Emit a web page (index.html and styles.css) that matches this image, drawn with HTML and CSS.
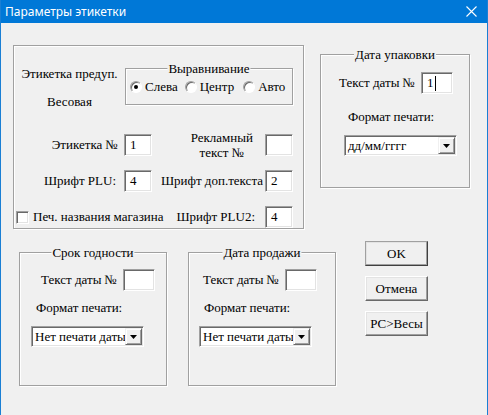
FILE: index.html
```html
<!DOCTYPE html>
<html lang="ru">
  <head>
    <meta charset="UTF-8" />
    <title>Параметры этикетки</title>
    <link rel="stylesheet" href="styles.css">
  </head>
  <body>
    <div class="window">
      <div class="titlebar">
        <span class="title">Параметры этикетки</span>
        <svg class="close" width="11" height="11" viewBox="0 0 11 11">
          <path d="M0.5 0.5 L10.5 10.5 M10.5 0.5 L0.5 10.5" stroke="#fff" stroke-width="1.1" fill="none" />
        </svg>
      </div>

      <div class="client">
        <div class="top">
          <!-- label settings -->
          <div class="group main">
            <div class="head">
              <div class="kind">
                <span>Этикетка предуп.</span>
                <span>Весовая</span>
              </div>
              <div class="group align">
                <span class="caption">Выравнивание</span>
                <label class="option"><span class="radio on"></span>Слева</label>
                <label class="option"><span class="radio"></span>Центр</label>
                <label class="option opt-last"><span class="radio"></span>Авто</label>
              </div>
            </div>

            <div class="fields">
              <span class="lbl">Этикетка №</span>
              <span class="field">1</span>
              <span class="lbl lbl-ad"><span class="two-line">Рекламный<br />текст №</span></span>
              <span class="field"></span>

              <span class="lbl lbl-plu">Шрифт PLU:</span>
              <span class="field">4</span>
              <span class="lbl lbl-extra">Шрифт доп.текста</span>
              <span class="field">2</span>

              <label class="check"><span class="box"></span>Печ. названия магазина</label>
              <span class="lbl lbl-plu2">Шрифт PLU2:</span>
              <span class="field">4</span>
            </div>
          </div>

          <!-- pack date -->
          <div class="group pack">
            <span class="caption">Дата упаковки</span>
            <div class="row">
              <span class="row-lbl">Текст даты №</span>
              <span class="field wide">1<span class="caret"></span></span>
            </div>
            <div class="fmt fmt-pack">Формат печати:</div>
            <div class="combo combo-pack">
              <span class="combo-text">дд/мм/гггг</span>
              <span class="drop"><svg width="7" height="4" viewBox="0 0 7 4"><path d="M0 0 H7 L3.5 4 Z" fill="#000" /></svg></span>
            </div>
          </div>
        </div>

        <div class="bottom">
          <div class="group date date-exp">
            <span class="caption">Срок годности</span>
            <div class="row">
              <span class="row-lbl">Текст даты №</span>
              <span class="field wide"></span>
            </div>
            <div class="fmt">Формат печати:</div>
            <div class="combo">
              <span class="combo-text">Нет печати даты</span>
              <span class="drop"><svg width="7" height="4" viewBox="0 0 7 4"><path d="M0 0 H7 L3.5 4 Z" fill="#000" /></svg></span>
            </div>
          </div>

          <div class="group date date-sale">
            <span class="caption">Дата продажи</span>
            <div class="row">
              <span class="row-lbl">Текст даты №</span>
              <span class="field wide"></span>
            </div>
            <div class="fmt">Формат печати:</div>
            <div class="combo">
              <span class="combo-text">Нет печати даты</span>
              <span class="drop"><svg width="7" height="4" viewBox="0 0 7 4"><path d="M0 0 H7 L3.5 4 Z" fill="#000" /></svg></span>
            </div>
          </div>

          <div class="buttons">
            <button class="btn default">OK</button>
            <button class="btn">Отмена</button>
            <button class="btn">PC&gt;Весы</button>
          </div>
        </div>
      </div>
    </div>
  </body>
</html>
```

FILE: styles.css
```css
* {
  box-sizing: border-box;
}
body {
  margin: 0;
  font-family: "Liberation Serif", Tinos, "Times New Roman", "DejaVu Serif", serif;
  font-size: 13px;
  color: #000;
  background: #f0f0f0;
}
.window {
  width: 488px;
  height: 415px;
  background: #f0f0f0;
  border-left: 1px solid #1a7fd4;
  border-right: 1px solid #1a7fd4;
  overflow: hidden;
}
.titlebar {
  height: 23px;
  background: #0078d7;
  color: #fff;
  display: flex;
  align-items: center;
  justify-content: space-between;
  padding: 0 10px 1px 4px;
  font-family: "Noto Sans", sans-serif;
  font-size: 12px;
}
.close {
  display: block;
}

/* group boxes */
.group {
  position: relative;
  border: 1px solid #a0a0a0;
  box-shadow: inset 1px 1px 0 #fff, 1px 1px 0 #fff;
}
.caption {
  position: absolute;
  top: -8px;
  left: 50%;
  transform: translateX(-50%);
  padding: 0 1px;
  line-height: 15px;
  white-space: nowrap;
  background: #f0f0f0;
}

.top {
  display: flex;
  align-items: flex-start;
  padding: 22px 0 0 12px;
}
.main {
  width: 291px;
  height: 184px;
  padding-top: 22px;
}
.head {
  display: flex;
}
.kind {
  width: 111px;
  margin-top: -2px;
  display: flex;
  flex-direction: column;
  align-items: center;
  gap: 13px;
  line-height: 15px;
}
.align {
  width: 168px;
  height: 37px;
  padding: 12px 0 0 4px;
  display: flex;
  gap: 7px;
}
.option {
  display: flex;
  align-items: center;
  gap: 3px;
  height: 12px;
  white-space: nowrap;
}
.opt-last {
  margin-left: 2px;
}
.radio {
  flex: none;
  width: 12px;
  height: 12px;
  border-radius: 50%;
  background: #fff;
  border: 1px solid;
  border-color: #a0a0a0 #fff #fff #a0a0a0;
  box-shadow: inset 1px 1px 0 #696969;
  display: grid;
  place-items: center;
}
.radio.on::after {
  content: "";
  width: 4px;
  height: 4px;
  border-radius: 50%;
  background: #000;
}

.fields {
  display: grid;
  grid-template-columns: 110px 28px 113px 28px;
  grid-auto-rows: 22px;
  row-gap: 14px;
  margin-top: 25px;
}
.lbl {
  display: flex;
  align-items: center;
  justify-content: flex-end;
  padding-right: 6px;
  white-space: nowrap;
}
.lbl-plu {
  padding-right: 8px;
}
.lbl-ad {
  padding-right: 12px;
}
.two-line {
  text-align: center;
  line-height: 15px;
}
.lbl-extra {
  padding-right: 2px;
}
.lbl-plu2 {
  padding-right: 10px;
}
.check {
  grid-column: 1 / 3;
  display: flex;
  align-items: center;
  gap: 4px;
  padding-left: 2px;
  white-space: nowrap;
}
.box {
  flex: none;
  width: 13px;
  height: 13px;
  background: #fff;
  border: 1px solid;
  border-color: #a0a0a0 #fff #fff #a0a0a0;
  box-shadow: inset 1px 1px 0 #696969, inset -1px -1px 0 #e3e3e3;
}

/* sunken edit field */
.field {
  display: flex;
  align-items: center;
  height: 22px;
  padding-left: 5px;
  background: #fff;
  border: 1px solid;
  border-color: #a0a0a0 #fff #fff #a0a0a0;
  box-shadow: inset 1px 1px 0 #696969, inset -1px -1px 0 #e3e3e3;
}
.field.wide {
  flex: none;
  width: 32px;
}
.caret {
  width: 1px;
  height: 15px;
  margin-left: 1px;
  background: #000;
}

.pack {
  width: 150px;
  height: 134px;
  margin: 9px 0 0 16px;
  padding: 17px 0 0 18px;
}
.row {
  display: flex;
  align-items: center;
}
.row-lbl {
  flex: none;
  width: 82px;
  white-space: nowrap;
}
.fmt {
  margin: 15px 0 0 9px;
  line-height: 15px;
  white-space: nowrap;
}
.combo {
  display: flex;
  width: 113px;
  height: 21px;
  margin: 11px 0 0 5px;
  background: #fff;
  border: 1px solid;
  border-color: #a0a0a0 #fff #fff #a0a0a0;
  box-shadow: inset 1px 1px 0 #696969, inset -1px -1px 0 #e3e3e3;
  padding: 1px;
}
.combo-text {
  flex: 1;
  overflow: hidden;
  white-space: nowrap;
  padding-left: 2px;
  line-height: 17px;
}
.drop {
  flex: none;
  width: 17px;
  display: grid;
  place-items: center;
  background: #f0f0f0;
  border: 1px solid;
  border-color: #f0f0f0 #696969 #696969 #f0f0f0;
  box-shadow: inset 1px 1px 0 #fff, inset -1px -1px 0 #a0a0a0;
}

.bottom {
  display: flex;
  align-items: flex-start;
  padding-left: 18px;
  margin-top: 12px;
}
.date {
  width: 148px;
  height: 134px;
  margin-top: 11px;
  padding-top: 16px;
}
.date-exp {
  padding-left: 21px;
}
.date-sale {
  margin-left: 21px;
  padding-left: 14px;
}
.date .fmt {
  margin: 9px 0 0 -5px;
}
.date .combo {
  margin: 11px 0 0 -10px;
}
.date-sale .fmt {
  margin-left: 1px;
}
.date-sale .combo {
  margin-left: -4px;
}

.buttons {
  display: flex;
  flex-direction: column;
  gap: 10px;
  margin-left: 29px;
}
.btn {
  width: 63px;
  height: 25px;
  padding: 0;
  font-family: inherit;
  font-size: 13px;
  color: #000;
  background: #f0f0f0;
  border: 1px solid;
  border-color: #fff #696969 #696969 #fff;
  box-shadow: inset -1px -1px 0 #a0a0a0, inset 1px 1px 0 #e3e3e3;
}
.btn.default {
  border-color: #a0a0a0 #404040 #404040 #a0a0a0;
}
```
